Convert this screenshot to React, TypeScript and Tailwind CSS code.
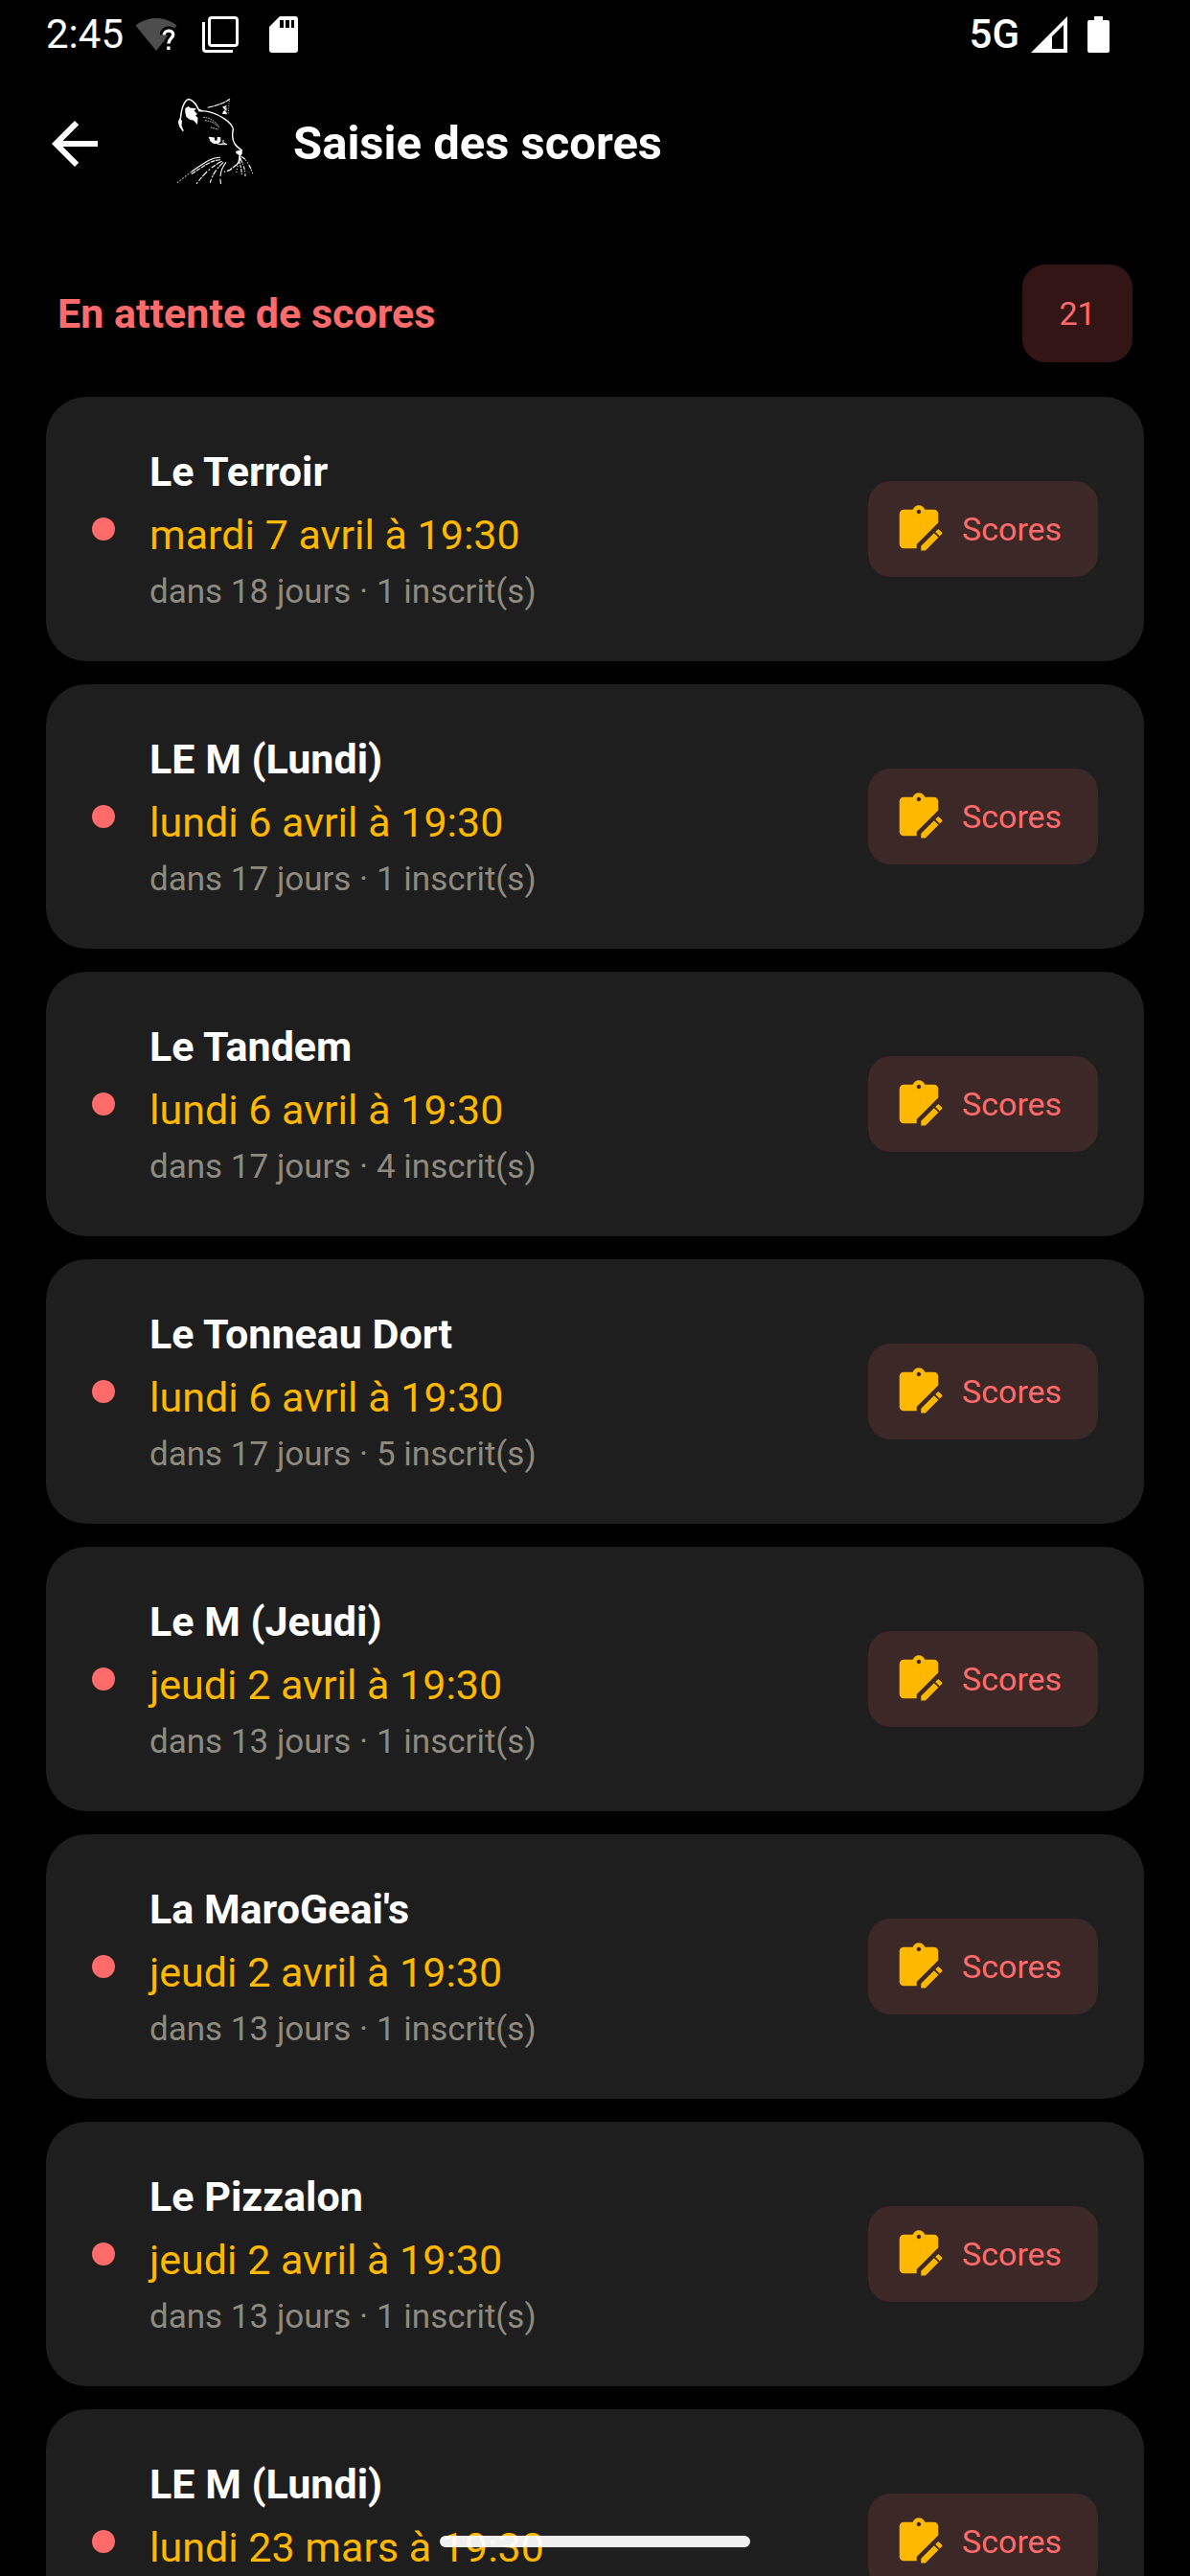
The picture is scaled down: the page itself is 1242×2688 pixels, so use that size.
import { useState } from 'react';

interface Session {
  id: number;
  place: string;
  date: string;
  days: number;
  players: number;
}

const PENDING_COUNT = 21;

const sessions: Session[] = [
  { id: 1, place: 'Le Terroir', date: 'mardi 7 avril à 19:30', days: 18, players: 1 },
  { id: 2, place: 'LE M (Lundi)', date: 'lundi 6 avril à 19:30', days: 17, players: 1 },
  { id: 3, place: 'Le Tandem', date: 'lundi 6 avril à 19:30', days: 17, players: 4 },
  { id: 4, place: 'Le Tonneau Dort', date: 'lundi 6 avril à 19:30', days: 17, players: 5 },
  { id: 5, place: 'Le M (Jeudi)', date: 'jeudi 2 avril à 19:30', days: 13, players: 1 },
  { id: 6, place: "La MaroGeai's", date: 'jeudi 2 avril à 19:30', days: 13, players: 1 },
  { id: 7, place: 'Le Pizzalon', date: 'jeudi 2 avril à 19:30', days: 13, players: 1 },
  { id: 8, place: 'LE M (Lundi)', date: 'lundi 23 mars à 19:30', days: 3, players: 1 },
];

const StatusBar = () => (
  <div className="flex h-[72px] shrink-0 items-center justify-between pr-[84px] pl-12 text-[42px] leading-none">
    <div className="flex items-center">
      <span>2:45</span>
      {/* wifi sans accès internet */}
      <svg className="ml-3 h-9 w-11" viewBox="0 0 44 36" fill="none">
        <path d="M0.5 8.5C13 -1.5 31 -1.5 43.5 8.5L22 35Z" fill="#4d4d4d" />
        <path
          d="M30.2 18.5C30.5 12.7 39.7 12.7 39.7 18C39.7 22 34.9 22.5 34.9 27.5M34.9 30.5V34"
          stroke="#000"
          strokeWidth="9"
        />
        <path
          d="M30.2 18.5C30.5 12.7 39.7 12.7 39.7 18C39.7 22 34.9 22.5 34.9 27.5M34.9 30.5V34"
          stroke="#fff"
          strokeWidth="3.4"
        />
      </svg>
      <svg className="ml-[26px] h-[38px] w-[38px]" viewBox="0 0 38 38" fill="none" stroke="#fff" strokeWidth="3">
        <rect x="7.5" y="1.5" width="29" height="29" rx="2.5" />
        <path d="M1.5 6V34Q1.5 36.5 4 36.5H32" />
      </svg>
      <svg className="ml-8 h-[38px] w-[30px]" viewBox="0 0 30 38">
        <path d="M11 0H27Q30 0 30 3V35Q30 38 27 38H3Q0 38 0 35V11Z" fill="#fff" />
        <path d="M11 4H15V12H11ZM17 4H21V12H17ZM23 4H26V12H23Z" fill="#000" />
      </svg>
    </div>
    <div className="flex items-center">
      <span className="font-medium">5G</span>
      <svg className="ml-3 h-[38px] w-[38px]" viewBox="0 0 38 38">
        <path d="M38 0V38H0ZM34 9L22 21V34H34Z" fill="#fff" fillRule="evenodd" />
      </svg>
      <svg className="ml-[21px] h-[38px] w-[23px]" viewBox="0 0 23 38">
        <path d="M7 0H16V4H21Q23 4 23 6V36Q23 38 21 38H2Q0 38 0 36V6Q0 4 2 4H7Z" fill="#fff" />
      </svg>
    </div>
  </div>
);

const CatLogo = () => (
  <svg className="h-24 w-20 overflow-visible" viewBox="0 0 80 96" fill="none" stroke="#fff">
    {/* oreilles */}
    <path
      d="M5.3 34.7L2 30L0.7 25L2.5 21C3 16 3.5 12 5.3 8Q8 2 10.7 1.5Q15 2 19 8L21.3 12.3L25 14"
      strokeWidth="1.5"
    />
    <path d="M2 22L4 24L3.5 29L5.5 34L2 30L0.5 27Z" fill="#fff" stroke="none" />
    <path
      d="M7.3 11L10.7 9L12.3 10.5L19 11.3L16.5 13.5L20 17L18 18.5L20.5 21L20 28L15.7 23.5L12.3 23L8.3 19.7L7.3 15Z"
      fill="#fff"
      stroke="none"
    />
    <path d="M30.7 10.3Q46 7 54 1.3" strokeWidth="1.1" strokeDasharray="6 0.6" />
    <path d="M53.3 3L52 18M50 10V18" strokeWidth="0.8" strokeDasharray="1 1.5" />
    <path d="M46 9.5L51 8L49 11L52 12L49 13L51 17L46 17L47 14L49 13Z" fill="#fff" stroke="none" />

    {/* front et museau */}
    <path
      d="M21.3 13.7C31 13 39 16 47.3 21.3C53 25 57 29 57.3 33C56 39 56.5 44 59 48Q61 51 66.7 55.3"
      strokeWidth="1.4"
    />
    <path d="M26.3 20.3Q37 21 43 31.3M28 23.7Q37 24.5 41.3 30.3M34 31L42 33" strokeWidth="0.9" strokeDasharray="1.5 1" />
    <path d="M60 56L63 55L66.7 54V58.5L65 61L65.5 64L62.5 67L63.5 60L60.5 58Z" fill="#fff" stroke="none" />
    <path d="M65 63Q63 69 59 71.3L54 75.3L48 77.3" strokeWidth="1.3" strokeDasharray="13 1 6 2" />

    {/* oeil */}
    <path
      d="M31.7 40.7L38 41.5V44.5H40.7V40.7L44.3 41.3V45.7L41.3 48H37L33.5 45.5L32.5 43Z"
      fill="#fff"
      stroke="none"
    />
    <path d="M41 48.3H45.5L47 46.5V44M47 47L51 48.7H43" strokeWidth="1" />

    {/* moustaches */}
    <g strokeWidth="1.1">
      <path d="M44 62.3C34 62 26 69 14 77" />
      <path d="M44 64.7C34 65 26 72 13 80" strokeDasharray="5 0.8" />
      <path d="M14 77L-1 88.7" stroke="#aaa" strokeDasharray="2 1.5" />
      <path d="M45.7 66.3Q31 73 19 90" strokeDasharray="7 1 5 2 2 2" />
      <path d="M47.3 67.3Q37 76 33.3 88.7" strokeDasharray="6 1 2 2" />
      <path d="M50 67.3Q42 77 44.5 90" strokeDasharray="16 3" />
      <path d="M65.7 61.3Q73 65 78 79.7" strokeDasharray="5 1 1 2 1 2" />
      <path d="M65 64Q70 73 70 82" strokeDasharray="4 1 1 2" />
      <path d="M63.3 65.3Q66 73 66.3 80" strokeDasharray="4 1 3 1" />
      <path d="M62.7 68L60.7 78" strokeDasharray="1 2" />
    </g>
  </svg>
);

const ClipboardEditIcon = () => (
  <svg className="h-[54px] w-[54px] shrink-0" viewBox="0 0 24 24" fill="#ffb800" aria-hidden="true">
    <path
      fillRule="evenodd"
      d="M21 9.1V5C21 3.9 20.1 3 19 3H14.82C14.4 1.84 13.3 1 12 1C10.7 1 9.6 1.84 9.18 3H5C3.9 3 3 3.9 3 5V19C3 20.1 3.9 21 5 21H11V19.1L21 9.1M12 3C12.55 3 13 3.45 13 4C13 4.55 12.55 5 12 5C11.45 5 11 4.55 11 4C11 3.45 11.45 3 12 3Z"
    />
    <path d="M21.04 12.13C21.18 12.13 21.31 12.19 21.42 12.3L22.7 13.58C22.92 13.79 22.92 14.14 22.7 14.35L21.7 15.35L19.65 13.3L20.65 12.3C20.76 12.19 20.9 12.13 21.04 12.13M19.07 13.88L21.12 15.93L15.06 22H13V19.94L19.07 13.88Z" />
  </svg>
);

const SessionCard = ({ session, onOpen }: { session: Session; onOpen: (id: number) => void }) => (
  <li className="flex shrink-0 items-center gap-9 rounded-[42px] bg-[#1e1e1e] p-12">
    <span className="h-6 w-6 shrink-0 rounded-full bg-[#ff6b6b]" />
    <div className="flex min-w-0 flex-1 flex-col gap-1.5">
      <h3 className="text-[43px] leading-[60px] font-bold text-white">{session.place}</h3>
      <p className="text-[43px] leading-[60px] text-[#ffb800]">{session.date}</p>
      <p className="text-[35px] leading-[48px] text-[#8e8a80]">
        dans {session.days} jours · {session.players} inscrit(s)
      </p>
    </div>
    <button
      type="button"
      onClick={() => onOpen(session.id)}
      className="flex h-25 w-60 items-center gap-[18px] rounded-3xl bg-[#3d2828] pl-[26px] text-[34px] text-[#ff6b6b]"
    >
      <ClipboardEditIcon />
      Scores
    </button>
  </li>
);

export default function App() {
  const [, setOpenId] = useState<number | null>(null);

  return (
    <div className="relative flex h-screen flex-col overflow-hidden bg-black font-[Roboto,sans-serif] text-white">
      <StatusBar />

      <header className="flex h-39 shrink-0 items-center pl-[42px]">
        <button type="button" aria-label="Retour">
          <svg className="h-[72px] w-[72px]" viewBox="0 0 24 24" fill="#fff">
            <path d="M20 11H7.83L13.42 5.41L12 4L4 12L12 20L13.41 18.59L7.83 13H20V11Z" />
          </svg>
        </button>
        <div className="ml-18">
          <CatLogo />
        </div>
        <h1 className="ml-10 text-[49px] font-bold">Saisie des scores</h1>
      </header>

      <main className="flex min-h-0 flex-1 flex-col overflow-y-auto px-12 pt-12 [scrollbar-width:none]">
        <div className="mb-9 flex shrink-0 items-center justify-between px-3">
          <h2 className="text-[43px] font-bold text-[#ff6b6b]">En attente de scores</h2>
          <span className="flex h-[102px] w-[115px] items-center justify-center rounded-3xl bg-[#331515] text-[34px] text-[#ff6b6b]">
            {PENDING_COUNT}
          </span>
        </div>
        <ul className="flex flex-col gap-6">
          {sessions.map((session) => (
            <SessionCard key={session.id} session={session} onOpen={setOpenId} />
          ))}
        </ul>
      </main>

      {/* barre de navigation gestuelle */}
      <div className="absolute bottom-[30px] left-1/2 h-3 w-[324px] -translate-x-1/2 rounded-full bg-white/93" />
    </div>
  );
}
